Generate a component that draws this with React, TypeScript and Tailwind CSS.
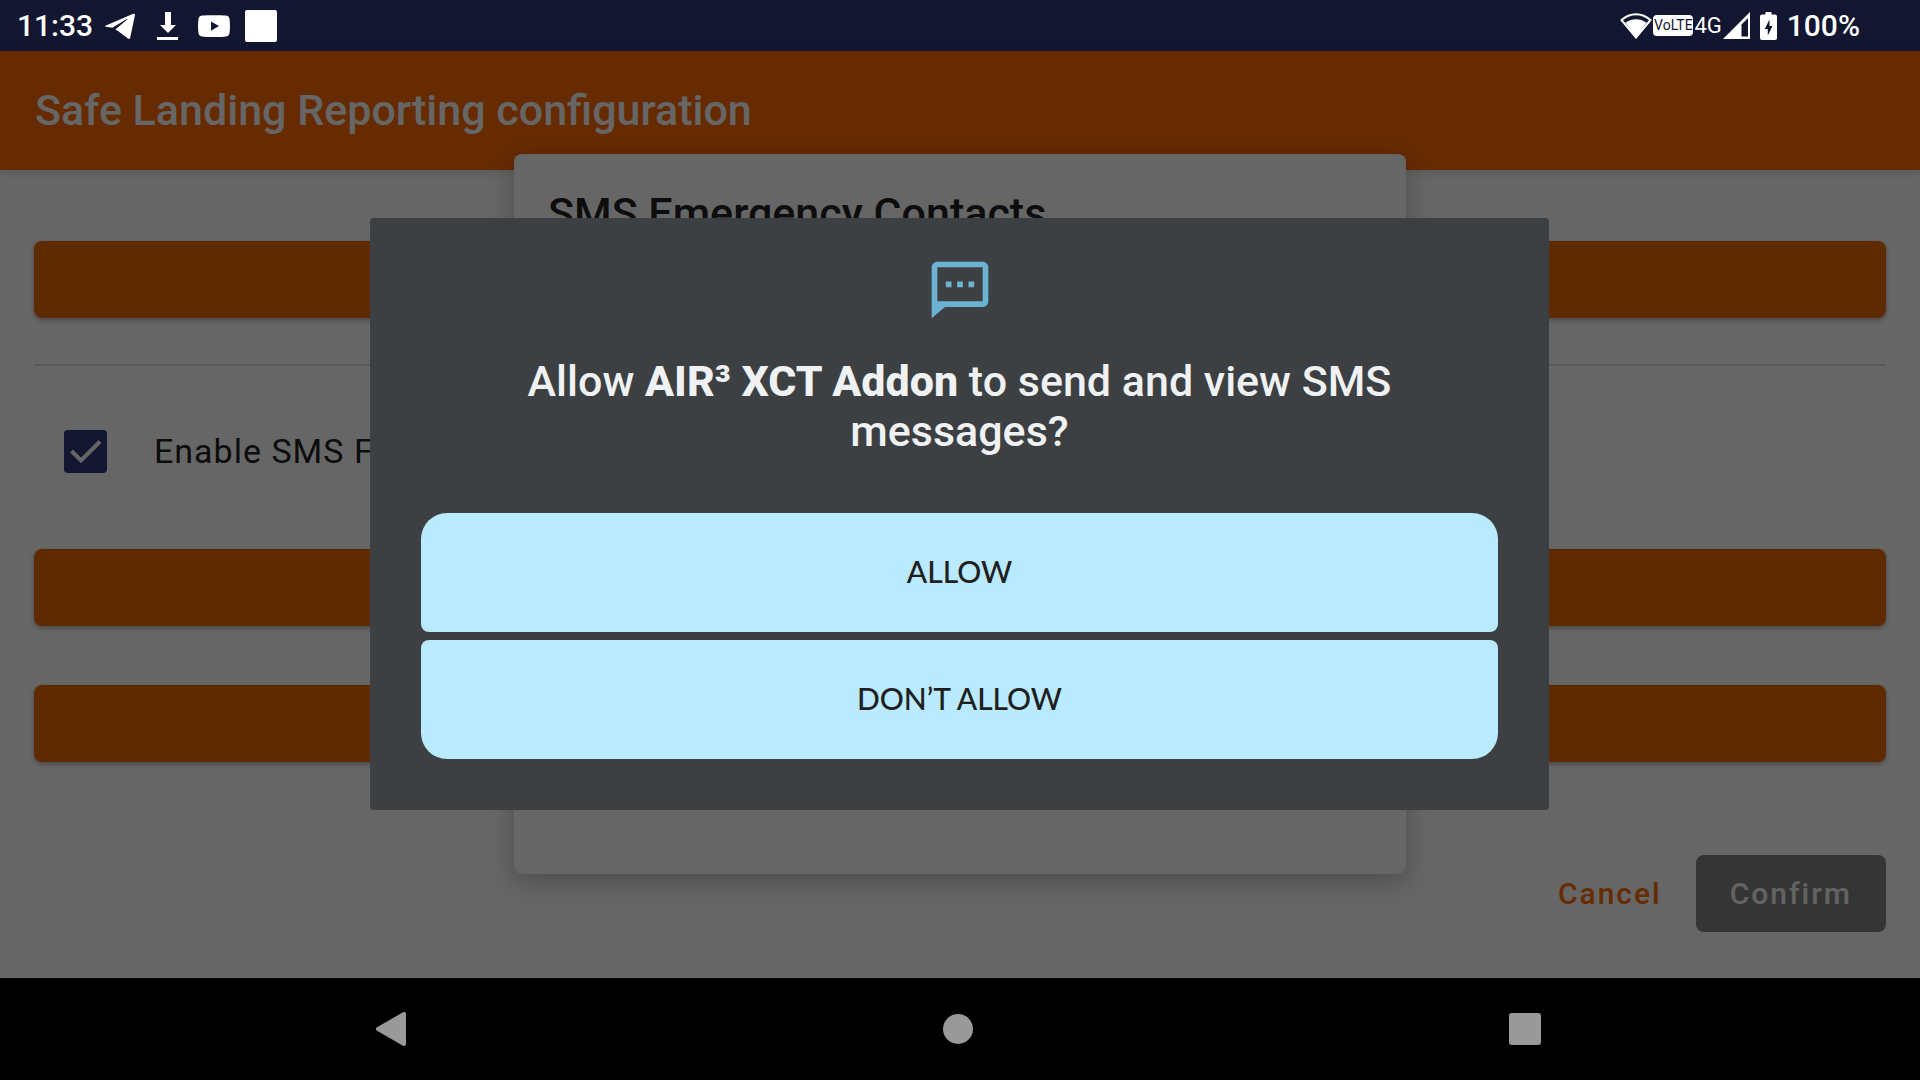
import React from 'react';

const TelegramIcon = () => (
  <svg viewBox="0 0 30 26" className="h-[26px] w-[30px] fill-white" aria-hidden="true">
    <path d="M1 12.4 28.2.8c1.2-.5 2 .1 1.700 1.600L25.300 24.300c-.3 1.500-1.300 1.900-2.400 1.200l-5.600-4.300-4-2.900-3-1.900 11.900-9.900c.5-.5-.1-.7-.8-.3L7.300 14.800.8 13.700c-1-.3-.9-.9.2-1.300Z" />
  </svg>
);

const DownloadIcon = () => (
  <svg viewBox="0 0 21 28" className="h-[28px] w-[21px] fill-white" aria-hidden="true">
    <path d="M8 0h6v13h5L11 21 3 13h5zM0 25h21v3H0z" />
  </svg>
);

const YoutubeIcon = () => (
  <svg viewBox="0 0 32 22" className="h-[22px] w-8 fill-white" aria-hidden="true">
    <path
      fillRule="evenodd"
      d="M4 .6C8 0 24 0 28 .6c2.500.4 3.300 1.600 3.600 4 .5 4 .5 9 0 12.800-.3 2.400-1.100 3.600-3.600 4-4 .7-20 .7-24 0-2.500-.4-3.300-1.600-3.600-4C-.1 13.600-.1 8.600.4 4.600.7 2.200 1.500 1 4 .6ZM13 6.500v9.200l8-4.600z"
    />
  </svg>
);

const WifiIcon = () => (
  <svg viewBox="0 0 32 27" className="h-[27px] w-8" aria-hidden="true">
    <path d="M1.500 8C10 .2 22 .2 30.500 8L16 25.500z" fill="none" stroke="white" strokeWidth="2" />
    <path d="M5.500 10.500C12 6 20 6 26.500 10.500L16 25.500z" fill="white" />
  </svg>
);

const SignalIcon = () => (
  <svg viewBox="0 0 27 27" className="h-[27px] w-[27px]" aria-hidden="true">
    <path fillRule="evenodd" fill="white" d="M27 0v27H0zM25 6l-6.500 6.500V24.500H25z" />
  </svg>
);

const BatteryIcon = () => (
  <svg viewBox="0 0 17 28" className="h-[28px] w-[17px]" aria-hidden="true">
    <path
      fillRule="evenodd"
      fill="white"
      d="M5.500 0h6v2.500H15a2 2 0 0 1 2 2V26a2 2 0 0 1-2 2H2a2 2 0 0 1-2-2V4.500a2 2 0 0 1 2-2h3.500zM9.500 7.500 4.800 17h3v6.500l4.700-9.500h-3z"
    />
  </svg>
);

const SmsIcon = () => (
  <svg viewBox="0 0 24 24" className="h-[68px] w-[68px] fill-[#6cb3d1]" aria-hidden="true">
    <path d="M20 2H4c-1.100 0-2 .9-2 2v18l4.700-4H20c1.100 0 2-.9 2-2V4c0-1.100-.9-2-2-2zm0 14H4V4h16v12zM7 9h2v2H7zm4 0h2v2h-2zm4 0h2v2h-2z" />
  </svg>
);

function StatusBar() {
  return (
    <header className="flex h-[51px] shrink-0 items-center justify-between bg-[#121630] pr-[60px] pl-[17px] text-[30px] font-medium text-white">
      <div className="flex items-center">
        <time className="mr-3">11:33</time>
        <TelegramIcon />
        <span className="ml-[22px] flex items-center gap-5">
          <DownloadIcon />
          <YoutubeIcon />
        </span>
        <span className="ml-[15px] size-8 rounded-xs bg-white" />
      </div>
      <div className="flex items-center">
        <WifiIcon />
        <span className="ml-px flex h-[21px] w-10 items-center justify-center rounded bg-white text-[14px] font-normal text-[#121630]">
          VoLTE
        </span>
        <span className="ml-px text-[22px] font-normal">4G</span>
        <span className="ml-px flex items-center gap-2.5">
          <SignalIcon />
          <BatteryIcon />
          <span>100%</span>
        </span>
      </div>
    </header>
  );
}

const RaisedButton = ({ label }: { label: string }) => (
  <button
    type="button"
    aria-label={label}
    className="h-[77px] w-full shrink-0 rounded-lg bg-[#ec6c00] shadow-[0_2px_5px_rgba(0,0,0,0.3)]"
  />
);

function ConfigurationScreen() {
  return (
    <div className="flex flex-1 flex-col bg-white">
      <div className="flex h-[119px] shrink-0 items-center bg-[#ff6c00] px-[35px] shadow-[0_2px_10px_rgba(0,0,0,0.15)]">
        <h1 className="text-[43px] font-medium text-white">Safe Landing Reporting configuration</h1>
      </div>
      <div className="flex flex-1 flex-col px-[34px] pt-[71px] pb-[46px]">
        <RaisedButton label="Contacts" />
        <hr className="mt-[46px] border-t-2 border-[#e0e0e0]" />
        <label className="mt-[51px] flex h-[68px] items-center pl-[30px] text-[34px] tracking-[1px] text-[#212121]">
          <span className="relative mr-[47px] flex size-[43px]">
            <input type="checkbox" defaultChecked className="size-full appearance-none rounded bg-[#2d3778]" />
            <svg viewBox="0 0 43 43" className="pointer-events-none absolute inset-0" aria-hidden="true">
              <path d="M7.500 21 17 30.500 36 11.500" fill="none" stroke="white" strokeWidth="4" />
            </svg>
          </span>
          Enable SMS F
        </label>
        <div className="mt-[64px] flex flex-col gap-[59px]">
          <RaisedButton label="SMS settings" />
          <RaisedButton label="Test message" />
        </div>
        <div className="mt-auto flex justify-end text-[30px] font-medium tracking-[2px]">
          <button type="button" className="h-[77px] px-[34px] text-[#ff6c00]">
            Cancel
          </button>
          <button type="button" className="h-[77px] rounded-lg bg-[#868686] px-[34px] text-[#f8f8f8]">
            Confirm
          </button>
        </div>
      </div>
    </div>
  );
}

function PermissionDialog() {
  return (
    <div
      role="dialog"
      aria-labelledby="permission-title"
      className="flex w-[1179px] max-w-full flex-col items-center rounded bg-[#3c4043] px-[51px] pt-[38px] pb-[51px]"
    >
      <SmsIcon />
      <h2 id="permission-title" className="mt-8 text-center text-[43px] leading-[50px] font-medium text-[#f0f1f3]">
        Allow <b className="font-extrabold">AIR³ XCT Addon</b> to send and view SMS
        <br />
        messages?
      </h2>
      <div className="mt-[57px] flex w-full flex-col gap-2 font-[Lato,sans-serif] text-[30px] font-medium text-[#1f1f1f]">
        <button type="button" className="h-[119px] rounded-t-[26px] rounded-b-lg bg-[#b9eaff] pb-0.5">
          ALLOW
        </button>
        <button type="button" className="h-[119px] rounded-t-lg rounded-b-[26px] bg-[#b9eaff] pb-0.5">
          DON’T ALLOW
        </button>
      </div>
    </div>
  );
}

function NavigationBar() {
  return (
    <nav className="flex h-[102px] shrink-0 items-center justify-between bg-black pr-[18.8%] pl-[18.6%]">
      <button type="button" aria-label="Back" className="flex size-[68px] items-center justify-center">
        <svg viewBox="0 0 30 34" className="h-[34px] w-[30px]" aria-hidden="true">
          <path d="M2 17 28 2v30z" fill="#999" stroke="#999" strokeWidth="4" strokeLinejoin="round" />
        </svg>
      </button>
      <button type="button" aria-label="Home" className="flex size-[68px] items-center justify-center">
        <span className="size-[30px] rounded-full bg-[#999]" />
      </button>
      <button type="button" aria-label="Recent apps" className="flex size-[68px] items-center justify-center">
        <span className="size-8 rounded-[3px] bg-[#999]" />
      </button>
    </nav>
  );
}

export default function App() {
  return (
    <div className="flex min-h-screen flex-col overflow-hidden font-[Roboto,sans-serif]">
      <StatusBar />
      <main className="relative flex flex-1 flex-col">
        <ConfigurationScreen />
        <div className="absolute inset-0 flex items-center justify-center pb-px">
          <section className="min-h-[720px] w-[892px] max-w-full rounded-lg bg-white px-[34px] pt-[34px] shadow-[0_8px_26px_rgba(0,0,0,0.25)]">
            <h2 className="text-[43px] leading-[50px] font-medium text-[#212121]">SMS Emergency Contacts</h2>
          </section>
        </div>
        <div className="absolute inset-0 flex items-center justify-center bg-black/60 pr-px pb-px">
          <PermissionDialog />
        </div>
      </main>
      <NavigationBar />
    </div>
  );
}
